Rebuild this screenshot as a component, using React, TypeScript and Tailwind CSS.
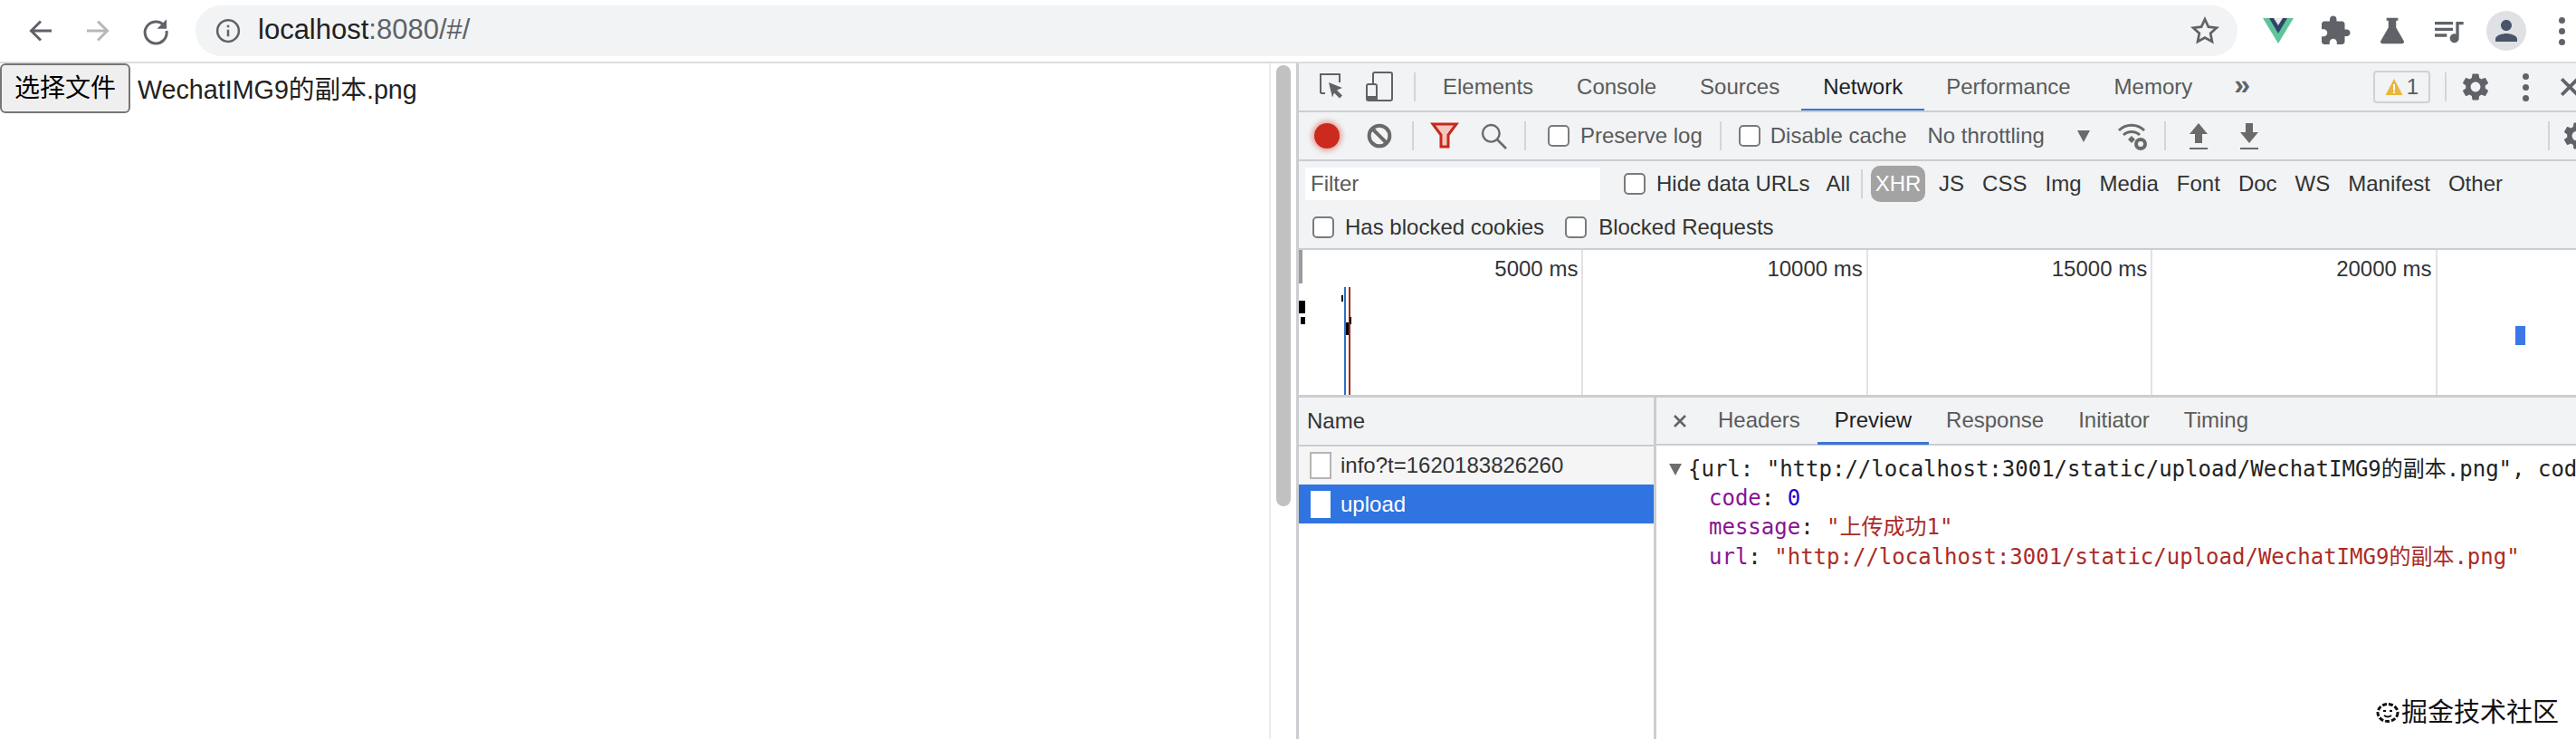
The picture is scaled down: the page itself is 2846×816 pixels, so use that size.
const GEAR = "M19.14 12.94c.04-.3.06-.61.06-.94 0-.32-.02-.64-.07-.94l2.03-1.58c.18-.14.23-.41.12-.61l-1.92-3.32c-.12-.22-.37-.29-.59-.22l-2.39.96c-.5-.38-1.03-.7-1.62-.94l-.36-2.54c-.04-.24-.24-.41-.48-.41h-3.84c-.24 0-.43.17-.47.41l-.36 2.54c-.59.24-1.13.57-1.62.94l-2.39-.96c-.22-.08-.47 0-.59.22L2.74 8.87c-.12.21-.08.47.12.61l2.03 1.58c-.05.3-.09.63-.09.94s.02.64.07.94l-2.03 1.58c-.18.14-.23.41-.12.61l1.92 3.32c.12.22.37.29.59.22l2.39-.96c.5.38 1.03.7 1.62.94l.36 2.54c.05.24.24.41.48.41h3.84c.24 0 .44-.17.47-.41l.36-2.54c.59-.24 1.13-.56 1.62-.94l2.39.96c.22.08.47 0 .59-.22l1.92-3.32c.12-.22.07-.47-.12-.61l-2.01-1.58zM12 15.6c-1.98 0-3.6-1.62-3.6-3.6s1.62-3.6 3.6-3.6 3.6 1.62 3.6 3.6-1.62 3.6-3.6 3.6z";

const Icon = ({ size, className, children }: { size: number; className?: string; children: React.ReactNode }) => (
  <svg width={size} height={size} viewBox="0 0 24 24" className={`shrink-0 ${className ?? ""}`}>
    {children}
  </svg>
);

const Sep = ({ className }: { className: string }) => <div className={`w-[2px] h-[32px] shrink-0 bg-[#d3d5d8] ${className}`} />;

const Check = ({ className }: { className?: string }) => (
  <div className={`w-[24px] h-[24px] shrink-0 rounded-[5px] border-2 border-[#7b7b7b] bg-white ${className ?? ""}`} />
);

const Dots = ({ className }: { className: string }) => (
  <div className={`flex flex-col gap-[5px] shrink-0 ${className}`}>
    <div className="w-[7px] h-[7px] rounded-full bg-[#5f6368]" />
    <div className="w-[7px] h-[7px] rounded-full bg-[#5f6368]" />
    <div className="w-[7px] h-[7px] rounded-full bg-[#5f6368]" />
  </div>
);

const ChromeBar = () => (
  <header className="h-[70px] shrink-0 border-b-2 border-[#dcdcdc] flex items-center bg-white text-[#5f6368]">
    <Icon size={36} className="ml-[27px]">
      <path d="M20 12H5M12 5l-7 7 7 7" fill="none" stroke="#5f6368" strokeWidth="2" />
    </Icon>
    <Icon size={36} className="ml-[27px]">
      <path d="M4 12h15M12 5l7 7-7 7" fill="none" stroke="#b6b8bb" strokeWidth="2" />
    </Icon>
    <Icon size={36} className="ml-[28px]">
      <path d="M18.5 8.5A8 8 0 1 0 20 12" fill="none" stroke="#5f6368" strokeWidth="2" />
      <path d="M20 3.5v7h-7z" fill="#5f6368" />
    </Icon>
    <div className="ml-[26px] w-[2256px] h-[56px] rounded-full bg-[#f1f3f4] flex items-center">
      <Icon size={30} className="ml-[21px]">
        <circle cx="12" cy="12" r="9.5" fill="none" stroke="#5f6368" strokeWidth="2" />
        <path d="M11 11h2v6h-2zM11 7h2v2h-2z" fill="#5f6368" />
      </Icon>
      <span className="ml-[18px] -mt-[2px] text-[31px] text-[#202124]">
        localhost<span className="text-[#5f6368]">:8080/#/</span>
      </span>
      <Icon size={36} className="ml-auto mr-[18px]">
        <path d="M12 3.5l2.6 5.6 6 .7-4.5 4.1 1.2 6L12 17l-5.3 2.9 1.2-6-4.5-4.1 6-.7z" fill="none" stroke="#5f6368" strokeWidth="1.8" />
      </Icon>
    </div>
    <svg width="34" height="30" viewBox="0 0 34 30" className="ml-[28px] shrink-0">
      <path d="M0 1h34L17 29z" fill="#5fc49a" />
      <path d="M7 1h20L17 18z" fill="#2f4468" />
      <path d="M12 1h10l-5 8z" fill="#e6ebea" />
    </svg>
    <Icon size={36} className="ml-[28px]">
      <path fill="#5f6368" d="M20.5 11H19V7c0-1.1-.9-2-2-2h-4V3.5C13 2.12 11.88 1 10.5 1S8 2.12 8 3.5V5H4c-1.1 0-1.99.9-1.99 2v3.8H3.5c1.49 0 2.7 1.21 2.7 2.7s-1.21 2.7-2.7 2.7H2V20c0 1.1.9 2 2 2h3.8v-1.5c0-1.49 1.21-2.7 2.7-2.7 1.49 0 2.7 1.21 2.7 2.7V22H17c1.1 0 2-.9 2-2v-4h1.5c1.38 0 2.5-1.12 2.5-2.5S21.88 11 20.5 11z" />
    </Icon>
    <Icon size={34} className="ml-[28px]">
      <path fill="#5f6368" d="M7.5 2h9v2H15v5.5l6 10.5c.6 1.1-.2 2-1.2 2H4.2C3.2 22 2.4 21.1 3 20l6-10.5V4H7.5z" />
    </Icon>
    <Icon size={40} className="ml-[25px]">
      <path fill="#5f6368" d="M15 6H3v2h12V6zm0 4H3v2h12v-2zM3 16h8v-2H3v2zM17 6v8.18c-.31-.11-.65-.18-1-.18-1.66 0-3 1.34-3 3s1.34 3 3 3 3-1.34 3-3V8h3V6h-5z" />
    </Icon>
    <div className="ml-[22px] w-[44px] h-[44px] shrink-0 rounded-full bg-[#dfe1e5] flex items-center justify-center">
      <Icon size={36}>
        <path fill="#4a5468" d="M12 12c2.21 0 4-1.79 4-4s-1.79-4-4-4-4 1.79-4 4 1.79 4 4 4zm0 2c-2.67 0-8 1.34-8 4v2h16v-2c0-2.66-5.33-4-8-4z" />
      </Icon>
    </div>
    <Dots className="ml-[36px]" />
  </header>
);

const Tab = ({ label, active, pad }: { label: string; active?: boolean; pad: string }) => (
  <div className={`h-full flex items-center border-b-[3px] -mb-[2px] shrink-0 ${pad} ${active ? "border-[#3a75d6] text-[#202124]" : "border-transparent text-[#5a5a5a]"}`}>
    {label}
  </div>
);

const TopTabs = () => (
  <div className="h-[54px] shrink-0 flex items-center border-b-2 border-[#cbcdd1] overflow-hidden">
    <svg width="34" height="34" viewBox="0 0 34 34" className="ml-[18px] shrink-0">
      <path d="M6 24V3h21v9M6 24h5" fill="none" stroke="#5f6368" strokeWidth="2" />
      <path d="M15 12l15 6-6 2.5 6 6-3 3-6-6-2 5z" fill="#5f6368" />
    </svg>
    <svg width="34" height="36" viewBox="0 0 34 36" className="ml-[20px] shrink-0">
      <rect x="10" y="2" width="21" height="31" rx="2" fill="none" stroke="#5f6368" strokeWidth="2" />
      <rect x="3" y="15" width="11" height="18" rx="2" fill="#f1f3f4" stroke="#5f6368" strokeWidth="2" />
      <path d="M3 28h11v5H3z" fill="#5f6368" />
    </svg>
    <Sep className="ml-[21px]" />
    <div className="h-full flex items-center ml-[6px] text-[24px]">
      <Tab pad="px-[24px]" label="Elements" />
      <Tab pad="px-[24px]" label="Console" />
      <Tab pad="px-[24px]" label="Sources" />
      <Tab pad="px-[24px]" label="Network" active />
      <Tab pad="px-[24px]" label="Performance" />
      <Tab pad="px-[24px]" label="Memory" />
    </div>
    <span className="ml-[22px] text-[32px] font-bold leading-none text-[#5f6368] shrink-0 -mt-[6px]">»</span>
    <div className="ml-[136px] w-[63px] h-[36px] shrink-0 rounded-[4px] border-2 border-[#cfd1d4] flex items-center justify-center gap-[4px] text-[24px] text-[#5a5a5a]">
      <svg width="20" height="20" viewBox="0 0 20 20">
        <path d="M10 1l9.5 18H.5z" fill="#eab53b" />
        <path d="M9 7h2v7H9zM9 15h2v2H9z" fill="#fff" />
      </svg>
      1
    </div>
    <Sep className="ml-[16px]" />
    <Icon size={36} className="ml-[14px]">
      <path fill="#5f6368" d={GEAR} />
    </Icon>
    <Dots className="ml-[34px]" />
    <Icon size={30} className="ml-[30px]">
      <path d="M5 5l14 14M19 5L5 19" fill="none" stroke="#5f6368" strokeWidth="3" />
    </Icon>
  </div>
);

const NetToolbar = () => (
  <div className="h-[54px] shrink-0 flex items-center border-b-2 border-[#cbcdd1] overflow-hidden text-[24px] text-[#5a5a5a]">
    <div className="ml-[17px] w-[28px] h-[28px] shrink-0 rounded-full bg-[#cb2a1c] shadow-[0_0_5px_3px_rgba(203,42,28,0.35)]" />
    <Icon size={32} className="ml-[28px]">
      <circle cx="12" cy="12" r="8.5" fill="none" stroke="#6a6a6a" strokeWidth="3" />
      <path d="M6 6l12 12" stroke="#6a6a6a" strokeWidth="3" />
    </Icon>
    <Sep className="ml-[20px]" />
    <svg width="32" height="32" viewBox="0 0 32 32" className="ml-[18px] shrink-0">
      <path d="M3 3h26L20 15v13h-8V15z" fill="#f3c6c0" stroke="#c8281c" strokeWidth="3" />
    </svg>
    <Icon size={32} className="ml-[22px]">
      <circle cx="10" cy="10" r="7" fill="none" stroke="#6a6a6a" strokeWidth="1.8" />
      <path d="M15 15l7.5 7.5" stroke="#6a6a6a" strokeWidth="2" />
    </Icon>
    <Sep className="ml-[18px]" />
    <Check className="ml-[24px]" />
    <span className="ml-[12px] shrink-0">Preserve log</span>
    <Sep className="ml-[19px]" />
    <Check className="ml-[19px]" />
    <span className="ml-[11px] shrink-0">Disable cache</span>
    <span className="ml-[23px] shrink-0">No throttling</span>
    <div className="ml-[36px] w-0 h-0 shrink-0 border-x-[7px] border-x-transparent border-t-[13px] border-t-[#6a6a6a]" />
    <svg width="36" height="36" viewBox="0 0 36 36" className="ml-[29px] shrink-0">
      <path d="M3 12a20 20 0 0 1 28 0M8 17a13 13 0 0 1 18 0" fill="none" stroke="#6a6a6a" strokeWidth="3" />
      <path d="M13 22l4-4 4 4-4 4z" fill="#6a6a6a" />
      <circle cx="27" cy="27" r="5" fill="none" stroke="#6a6a6a" strokeWidth="4" />
    </svg>
    <Sep className="ml-[17px]" />
    <svg width="24" height="32" viewBox="0 0 24 32" className="ml-[24px] shrink-0">
      <path d="M12 2l10 12h-6v10H8V14H2z" fill="#6a6a6a" />
      <path d="M2 29h20v2H2z" fill="#6a6a6a" />
    </svg>
    <svg width="24" height="32" viewBox="0 0 24 32" className="ml-[32px] shrink-0">
      <path d="M8 2h8v10h6L12 24 2 12h6z" fill="#6a6a6a" />
      <path d="M2 29h20v2H2z" fill="#6a6a6a" />
    </svg>
    <Sep className="ml-[318px]" />
    <Icon size={36} className="ml-[12px]">
      <path fill="#5f6368" d={GEAR} />
    </Icon>
  </div>
);

const FilterRows = () => (
  <div className="h-[98px] shrink-0 border-b-2 border-[#cbcdd1] text-[24px] text-[#333] overflow-hidden">
    <div className="h-[50px] flex items-center">
      <div className="ml-[7px] w-[326px] h-[36px] shrink-0 bg-white pl-[6px] leading-[36px] text-[#5a5a5a]">Filter</div>
      <Check className="ml-[26px]" />
      <span className="ml-[12px] shrink-0">Hide data URLs</span>
      <span className="ml-[18px] shrink-0">All</span>
      <div className="ml-[12px] w-[2px] h-[32px] bg-[#d3d5d8] shrink-0" />
      <div className="ml-[9px] w-[60px] h-[40px] rounded-[10px] bg-[#a3a3a3] text-white flex items-center justify-center shrink-0">XHR</div>
      <div className="flex items-center gap-[20px] ml-[15px]">
        <span>JS</span>
        <span>CSS</span>
        <span>Img</span>
        <span>Media</span>
        <span>Font</span>
        <span>Doc</span>
        <span>WS</span>
        <span>Manifest</span>
        <span>Other</span>
      </div>
    </div>
    <div className="h-[46px] flex items-center">
      <Check className="ml-[15px]" />
      <span className="ml-[12px] shrink-0">Has blocked cookies</span>
      <Check className="ml-[23px]" />
      <span className="ml-[13px] shrink-0">Blocked Requests</span>
    </div>
  </div>
);

const Overview = () => (
  <div className="relative h-[163px] shrink-0 flex bg-white border-b-[3px] border-[#cbcdd1] overflow-hidden">
    {["5000 ms", "10000 ms", "15000 ms", "20000 ms"].map((t) => (
      <div key={t} className="w-[314.4px] shrink-0 border-r-2 border-[#e2e2e2] text-right pr-[4px] pt-[6px] text-[24px] leading-[30px] text-[#333]">
        {t}
      </div>
    ))}
    <svg width="1414" height="163" viewBox="0 0 1414 163" className="absolute left-0 top-0">
      <path d="M0 0h4v37H0z" fill="#9b9b9b" />
      <path d="M50 41h2v121h-2z" fill="#2f6fc9" />
      <path d="M55 41h2v121h-2z" fill="#a3281c" />
      <path d="M0 56h7v14H0zM2 74h5v8H2zM47 50h2v7h-2zM52 80h3v14h-3zM56 74h2v8h-2z" fill="#000" />
      <path d="M1344 84h11v21h-11z" fill="#3b78e7" />
    </svg>
  </div>
);

const NamePanel = () => (
  <div className="w-[395px] shrink-0 flex flex-col border-r-[3px] border-[#cbcdd1] bg-white text-[24px] text-[#333]">
    <div className="h-[54px] shrink-0 bg-[#f1f3f4] border-b-2 border-[#cbcdd1] flex items-center pl-[9px]">Name</div>
    <div className="h-[42px] shrink-0 bg-[#f5f5f5] flex items-center pl-[12px]">
      <div className="w-[24px] h-[30px] bg-white border-2 border-[#b5b5b5] shrink-0" />
      <span className="ml-[10px]">info?t=1620183826260</span>
    </div>
    <div className="h-[43px] shrink-0 bg-[#2f74e0] flex items-center pl-[13px] text-white">
      <div className="w-[22px] h-[30px] bg-white shrink-0" />
      <span className="ml-[11px]">upload</span>
    </div>
  </div>
);

const Preview = () => (
  <div className="flex-1 min-w-0 flex flex-col bg-white overflow-hidden">
    <div className="h-[53px] shrink-0 bg-[#f1f3f4] border-b-2 border-[#cbcdd1] flex items-center text-[24px]">
      <Icon size={24} className="ml-[14px] mr-[11px]">
        <path d="M6 6l12 12M18 6L6 18" fill="none" stroke="#5f6368" strokeWidth="2.5" />
      </Icon>
      <Tab pad="px-[19px]" label="Headers" />
      <Tab pad="px-[19px]" label="Preview" active />
      <Tab pad="px-[19px]" label="Response" />
      <Tab pad="px-[19px]" label="Initiator" />
      <Tab pad="px-[19px]" label="Timing" />
    </div>
    <div className="font-['DejaVu_Sans_Mono','Noto_Sans_CJK_SC',monospace] text-[24px] leading-[33px] whitespace-nowrap pt-[10px] pl-[14px]">
      <div className="flex items-center text-[#222]">
        <div className="w-0 h-0 border-x-[7px] border-x-transparent border-t-[13px] border-t-[#6e6e6e] mr-[7px]" />
        {'{url: "http://localhost:3001/static/upload/WechatIMG9的副本.png", code: 0, message: "上传成功1"}'}
      </div>
      <div className="pl-[44px] -mt-px">
        <span className="text-[#881391]">code</span>
        <span className="text-[#222]">: </span>
        <span className="text-[#1c00cf]">0</span>
      </div>
      <div className="pl-[44px] -mt-px">
        <span className="text-[#881391]">message</span>
        <span className="text-[#222]">: </span>
        <span className="text-[#ab2b26]">"上传成功1"</span>
      </div>
      <div className="pl-[44px]">
        <span className="text-[#881391]">url</span>
        <span className="text-[#222]">: </span>
        <span className="text-[#ab2b26]">"http://localhost:3001/static/upload/WechatIMG9的副本.png"</span>
      </div>
    </div>
  </div>
);

const DevTools = () => (
  <div className="w-[1414px] shrink-0 flex flex-col bg-[#f1f3f4] border-l-[3px] border-[#cbcdd1] overflow-hidden">
    <TopTabs />
    <NetToolbar />
    <FilterRows />
    <Overview />
    <div className="flex-1 min-h-0 flex">
      <NamePanel />
      <Preview />
    </div>
  </div>
);

const App = () => (
  <div className="relative w-[2846px] h-[816px] flex flex-col overflow-hidden bg-white font-['Liberation_Sans','Noto_Sans_CJK_SC',sans-serif]">
    <ChromeBar />
    <div className="flex-1 min-h-0 flex">
      <div className="flex-1 min-w-0 flex items-start">
        <button className="w-[144px] h-[55px] shrink-0 rounded-[6px] border-2 border-[#767676] bg-[#efefef] text-[28px] text-black">选择文件</button>
        <span className="ml-[8px] text-[28.7px] leading-[58px] text-[#222]">WechatIMG9的副本.png</span>
      </div>
      <div className="w-[30px] shrink-0 border-l-2 border-[#ececec] bg-white pl-[6px] pr-[6px] pt-[2px]">
        <div className="w-[16px] h-[487px] rounded-full bg-[#c1c1c1]" />
      </div>
      <DevTools />
    </div>
    <div className="absolute right-[19px] bottom-[14px] flex items-center gap-[2px] text-[29px] leading-[30px] text-[#111]">
      <svg width="26" height="24" viewBox="0 0 26 24">
        <ellipse cx="13" cy="12" rx="11" ry="9.5" fill="none" stroke="#111" strokeWidth="3" strokeDasharray="5 2" />
        <path d="M8 10h3M15 10h3M9 15q4 3 8 0" fill="none" stroke="#111" strokeWidth="2" />
      </svg>
      掘金技术社区
    </div>
  </div>
);

export default App;
